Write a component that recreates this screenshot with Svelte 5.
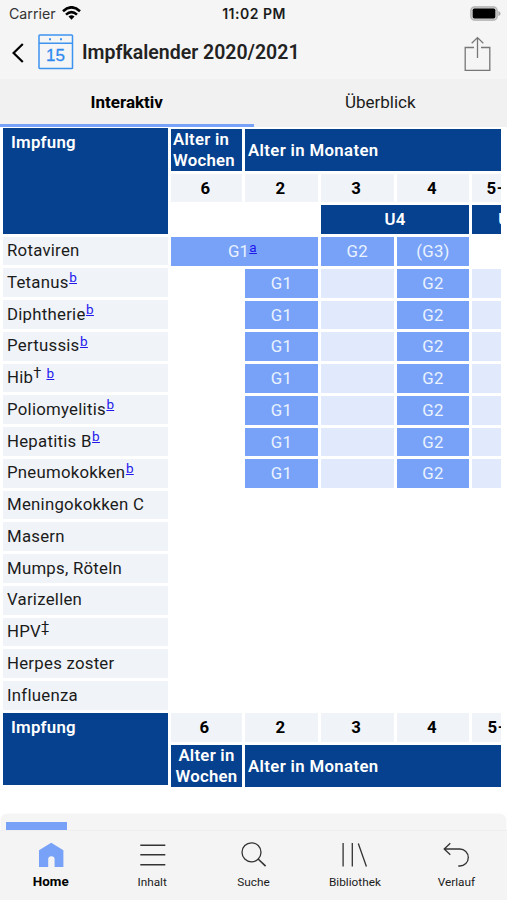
<script>
    const vaccines = [
        { name: "Rotaviren" },
        { name: "Tetanus", ref: "b", basic: true },
        { name: "Diphtherie", ref: "b", basic: true },
        { name: "Pertussis", ref: "b", basic: true },
        { name: "Hib", mark: "†", ref: "b", basic: true },
        { name: "Poliomyelitis", ref: "b", basic: true },
        { name: "Hepatitis B", ref: "b", basic: true },
        { name: "Pneumokokken", ref: "b", basic: true },
        { name: "Meningokokken C" },
        { name: "Masern" },
        { name: "Mumps, Röteln" },
        { name: "Varizellen" },
        { name: "HPV", mark: "‡" },
        { name: "Herpes zoster" },
        { name: "Influenza" },
    ];
    const ages = ["6", "2", "3", "4", "5–10"];
    const tabs = ["Interaktiv", "Überblick"];
    const nav = ["Home", "Inhalt", "Suche", "Bibliothek", "Verlauf"];

    let activeTab = $state(0);
    let activeNav = $state(0);
</script>

<div class="app">
    <div class="status">
        <div class="carrier">
            Carrier
            <svg width="19" height="14" viewBox="0 0 19 14" fill="none" stroke="#000" stroke-width="2.6">
                <path d="M1 5.2Q9.5-2.6 18 5.2M4 8.6Q9.5 3.6 15 8.6" />
                <path d="M6.5 10.5Q9.5 7.8 12.5 10.5L9.5 13.7Z" fill="#000" stroke="none" />
            </svg>
        </div>
        <div class="time">11:02 PM</div>
        <svg class="battery" width="31" height="15" viewBox="0 0 31 15">
            <rect x="0.8" y="0.8" width="26.4" height="13.4" rx="3.8" fill="#ccc" stroke="#b0b0b0" stroke-width="1.2" />
            <rect x="2.7" y="2.5" width="22.6" height="10" rx="1.8" fill="#000" />
            <path d="M28.4 5Q30.5 5.5 30.5 7.5T28.4 10Z" fill="#aaa" />
        </svg>
    </div>

    <header>
        <svg class="back" width="12" height="20" viewBox="0 0 12 20" fill="none" stroke="#000" stroke-width="2.2">
            <path d="M10.8 1 1.6 10l9.2 9" />
        </svg>
        <svg class="calendar" width="36" height="36" viewBox="0 0 36 36" fill="none" stroke="#3d93f0" stroke-width="1.5">
            <rect x="1" y="1" width="33.5" height="33.5" rx="0.8" />
            <path d="M1 9.2h33.5" />
            <path d="M11 5.2h2M22 5.2h2" stroke-width="2" />
            <text x="17.4" y="26.6" text-anchor="middle" fill="#2f8af0" stroke="#2f8af0" stroke-width="0.3">15</text>
        </svg>
        <h1>Impfkalender 2020/2021</h1>
        <svg class="share" width="27" height="36" viewBox="0 0 27 36" fill="none" stroke="#777" stroke-width="1.3">
            <path d="M10 11.5H1.2V34.3H25.8V11.5H17" />
            <path d="M13.5 22V1.8M7.7 7.3l5.8-5.7 5.8 5.7" />
        </svg>
    </header>

    <div class="tabs">
        {#each tabs as tab, i (tab)}
            <button class:active={activeTab === i} onclick={() => (activeTab = i)}>{tab}</button>
        {/each}
    </div>

    <main>
        <div class="names">
            <div class="corner">Impfung</div>
            {#each vaccines as v (v.name)}
                <div class="name">
                    {v.name}{#if v.mark}<sup class="mark">{v.mark}</sup>{/if}{#if v.mark && v.ref}{" "}{/if}{#if v.ref}<sup class="ref">{v.ref}</sup>{/if}
                </div>
            {/each}
            <div class="corner">Impfung</div>
        </div>
        <div class="plan">
            <div class="head">Alter in Wochen</div>
            <div class="head months">Alter in Monaten</div>
            {#each ages as age (age)}
                <div class="age">{age}</div>
            {/each}
            <div class="gap two"></div>
            <div class="head check two">U4</div>
            <div class="head check">U5</div>
            {#each vaccines as v, i (v.name)}
                {#if i === 0}
                    <div class="dose two">G1<sup class="ref">a</sup></div>
                    <div class="dose">G2</div>
                    <div class="dose">(G3)</div>
                    <div class="gap"></div>
                {:else if v.basic}
                    <div class="gap"></div>
                    <div class="dose">G1</div>
                    <div class="catchup"></div>
                    <div class="dose">G2</div>
                    <div class="catchup"></div>
                {:else}
                    <div class="gap all"></div>
                {/if}
            {/each}
            {#each ages as age (age)}
                <div class="age">{age}</div>
            {/each}
            <div class="head centered">Alter in Wochen</div>
            <div class="head months">Alter in Monaten</div>
        </div>
    </main>

    <div class="track"><div class="thumb"></div></div>

    <nav>
        {#each nav as item, i (item)}
            <button class:active={activeNav === i} onclick={() => (activeNav = i)}>
                <svg width="28" height="26" viewBox="0 0 28 26" fill="none" stroke="#333" stroke-width="1.3">
                    {#if i === 0}
                        <path d="M14.2.8 26.4 8.2V25H17.6V17.5a3.2 3.2 0 0 0-6.4 0V25H2V8.2Z" fill="#78a2f8" stroke="none" />
                    {:else if i === 1}
                        <path d="M2.3 3.2h25M2.3 12.8h25M2.3 22.7h25" stroke-width="1.5" />
                    {:else if i === 2}
                        <circle cx="11.5" cy="10.3" r="9.5" />
                        <path d="m18.1 17 7.5 7.2" stroke-width="1.6" />
                    {:else if i === 3}
                        <path d="M2.1 1v23.5M11.3 1v23.5M17.3 1.5l8.1 23" />
                    {:else}
                        <path d="M8.3 1.2 2.2 7l6.1 5.8M2.5 7h15.3a8.5 8.5 0 0 1 0 17h-1.5" />
                    {/if}
                </svg>
                {item}
            </button>
        {/each}
    </nav>
</div>

<style>
    :global(body) {
        margin: 0;
        background: #fff;
    }
    .app {
        display: flex;
        flex-direction: column;
        height: 900px;
        overflow: hidden;
        font-family: Roboto, sans-serif;
        color: #1b1b1b;
    }
    button {
        border: 0;
        padding: 0;
        background: none;
        font: inherit;
        color: inherit;
    }
    .status {
        display: grid;
        grid-template-columns: 1fr auto 1fr;
        align-items: center;
        height: 28px;
        padding: 0 6px 0 9px;
        background: #f5f5f5;
        font: 14.2px/28px Inter, sans-serif;
        .carrier {
            display: flex;
            align-items: center;
            gap: 6px;
            color: #333;
        }
        .carrier svg {
            margin-top: -2px;
        }
        .time {
            margin-right: 2px;
            font-weight: 600;
            font-size: 14px;
            letter-spacing: 0.5px;
        }
        .battery {
            justify-self: end;
            margin-top: -2px;
        }
    }
    header {
        display: flex;
        align-items: center;
        height: 51px;
        padding: 0 16px 0 12px;
        background: #f5f5f5;
        .back {
            margin-top: -1px;
        }
        .calendar {
            margin: -3px 0 0 14px;
        }
        text {
            font: 17px "Liberation Sans", sans-serif;
        }
        h1 {
            margin: 0 auto 0 8px;
            font-size: 19.5px;
            font-weight: 600;
            line-height: 50px;
            padding-bottom: 1px;
            color: #222;
        }
    }
    .tabs {
        display: flex;
        height: 48px;
        background: #f1f1f1;
        button {
            box-sizing: border-box;
            flex: 1;
            padding-top: 1px;
            border-bottom: 3px solid transparent;
            font-size: 17px;
        }
        .active {
            border-bottom-color: #78a2f8;
            font-weight: 700;
            color: #000;
        }
    }
    main {
        display: flex;
        flex: 1;
        gap: 3px;
        min-height: 0;
        padding: 1px 6px 0 3px;
        font-size: 16.8px;
        line-height: 20.5px;
        letter-spacing: 0.25px;
    }
    .names {
        display: grid;
        grid-template-rows: 105.5px repeat(15, 28.75px) 72.5px;
        gap: 3px;
        width: 165px;
        align-content: start;
    }
    .corner {
        padding: 4px 8px;
        background: #05418f;
        color: #fff;
        font-weight: 600;
    }
    .name {
        padding: 3.6px 4px;
        background: #f0f3f8;
        white-space: pre;
    }
    sup {
        font-size: 13.5px;
        line-height: 0;
        vertical-align: 5.5px;
    }
    .mark {
        font-size: 14.5px;
    }
    .ref {
        color: #2218ee;
        text-decoration: underline;
    }
    .plan {
        display: grid;
        flex: 1;
        grid-template-columns: 71px repeat(4, 72.8px);
        grid-template-rows: 41.5px repeat(18, 28.75px) 41.5px;
        gap: 3px;
        padding-top: 1px;
        min-width: 0;
        overflow: hidden;
        align-content: start;
        text-align: center;
    }
    .head {
        display: flex;
        align-items: center;
        padding: 0 2px;
        background: #05418f;
        color: #fff;
        font-weight: 600;
        text-align: left;
    }
    .months {
        grid-column: span 4;
        padding-left: 3px;
        letter-spacing: 0.35px;
    }
    .check {
        justify-content: center;
    }
    .centered {
        text-align: center;
    }
    .age {
        padding-right: 2px;
        background: #f0f3f8;
        color: #000;
        font-weight: 700;
        line-height: 28px;
    }
    .age:nth-child(5n + 2) {
        padding-right: 4px;
    }
    .dose {
        background: #78a2f8;
        color: #eaf2ff;
        line-height: 29px;
    }
    .dose.two {
        padding-right: 4px;
    }
    .catchup {
        background: #e1eafd;
    }
    .two {
        grid-column: span 2;
    }
    .all {
        grid-column: span 5;
    }
    .name .ref {
        margin-left: 0.5px;
    }
    .track {
        height: 9px;
        margin: 0 2px;
        padding: 7px 4px 0;
        border-radius: 5px 5px 0 0;
        background: #f5f5f5;
        box-shadow: 0 0 3px rgba(0, 0, 0, 0.12);
    }
    .thumb {
        width: 61px;
        height: 9px;
        background: #78a2f8;
    }
    nav {
        display: flex;
        height: 69px;
        background: #f4f4f4;
        box-shadow: 0 -1px 0 #eee;
        button {
            display: flex;
            flex: 1;
            flex-direction: column;
            align-items: center;
            gap: 6px;
            padding-top: 11px;
            font-size: 11.8px;
            line-height: 16px;
        }
        .active {
            font-size: 13.4px;
            font-weight: 700;
            color: #000;
        }
    }
</style>
